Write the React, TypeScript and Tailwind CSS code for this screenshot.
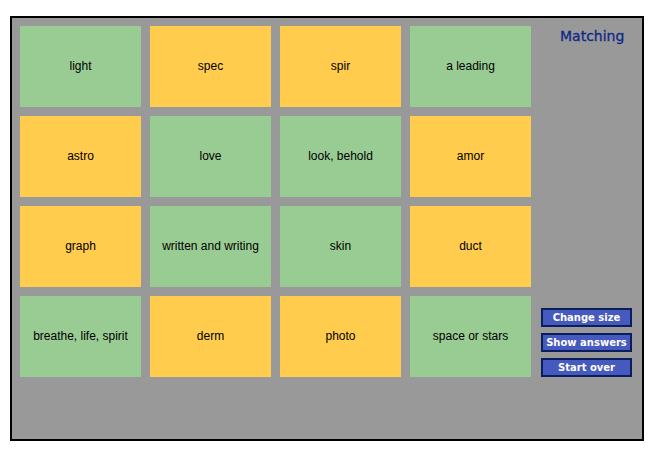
import React from "react";

const tiles: { t: string; c: "g" | "y" }[] = [
  { t: "light", c: "g" },
  { t: "spec", c: "y" },
  { t: "spir", c: "y" },
  { t: "a leading", c: "g" },
  { t: "astro", c: "y" },
  { t: "love", c: "g" },
  { t: "look, behold", c: "g" },
  { t: "amor", c: "y" },
  { t: "graph", c: "y" },
  { t: "written and writing", c: "g" },
  { t: "skin", c: "g" },
  { t: "duct", c: "y" },
  { t: "breathe, life, spirit", c: "g" },
  { t: "derm", c: "y" },
  { t: "photo", c: "y" },
  { t: "space or stars", c: "g" },
];

export default function App() {
  return (
    <div className="w-[661px] h-[451px] bg-white pt-[16px] pl-[10px]">
      <div className="w-[634px] h-[425px] border-2 border-black bg-[#999999] flex pl-[8px] pt-[8px]">
        <div className="grid grid-cols-[repeat(4,121px)] grid-rows-[repeat(4,81px)] gap-[9px]">
          {tiles.map((x, i) => (
            <div
              key={i}
              className={`flex items-center justify-center pb-[2px] text-[12px] text-black ${
                x.c === "g" ? "bg-[#99cc93]" : "bg-[#ffcc4d]"
              }`}
              style={{ fontFamily: '"Liberation Sans", Arial, sans-serif' }}
            >
              {x.t}
            </div>
          ))}
        </div>
        <div className="ml-[10px] w-[91px] h-[351px] flex flex-col justify-between">
          <div
            className="text-[14px] leading-[18px] text-[#0f2a85] pl-[19px] pt-[1px] [-webkit-text-stroke:0.3px_#0f2a85]"
            style={{ fontFamily: '"DejaVu Sans", Verdana, sans-serif' }}
          >
            Matching
          </div>
          <div className="flex flex-col gap-[6px]">
            {["Change size", "Show answers", "Start over"].map((b) => (
              <div
                key={b}
                className="h-[19px] border-2 border-[#0a1e5e] bg-[#4659be] text-white font-bold text-[10px] leading-[15px] whitespace-nowrap flex items-center justify-center"
                style={{ fontFamily: '"DejaVu Sans", Verdana, sans-serif' }}
              >
                {b}
              </div>
            ))}
          </div>
        </div>
      </div>
    </div>
  );
}
